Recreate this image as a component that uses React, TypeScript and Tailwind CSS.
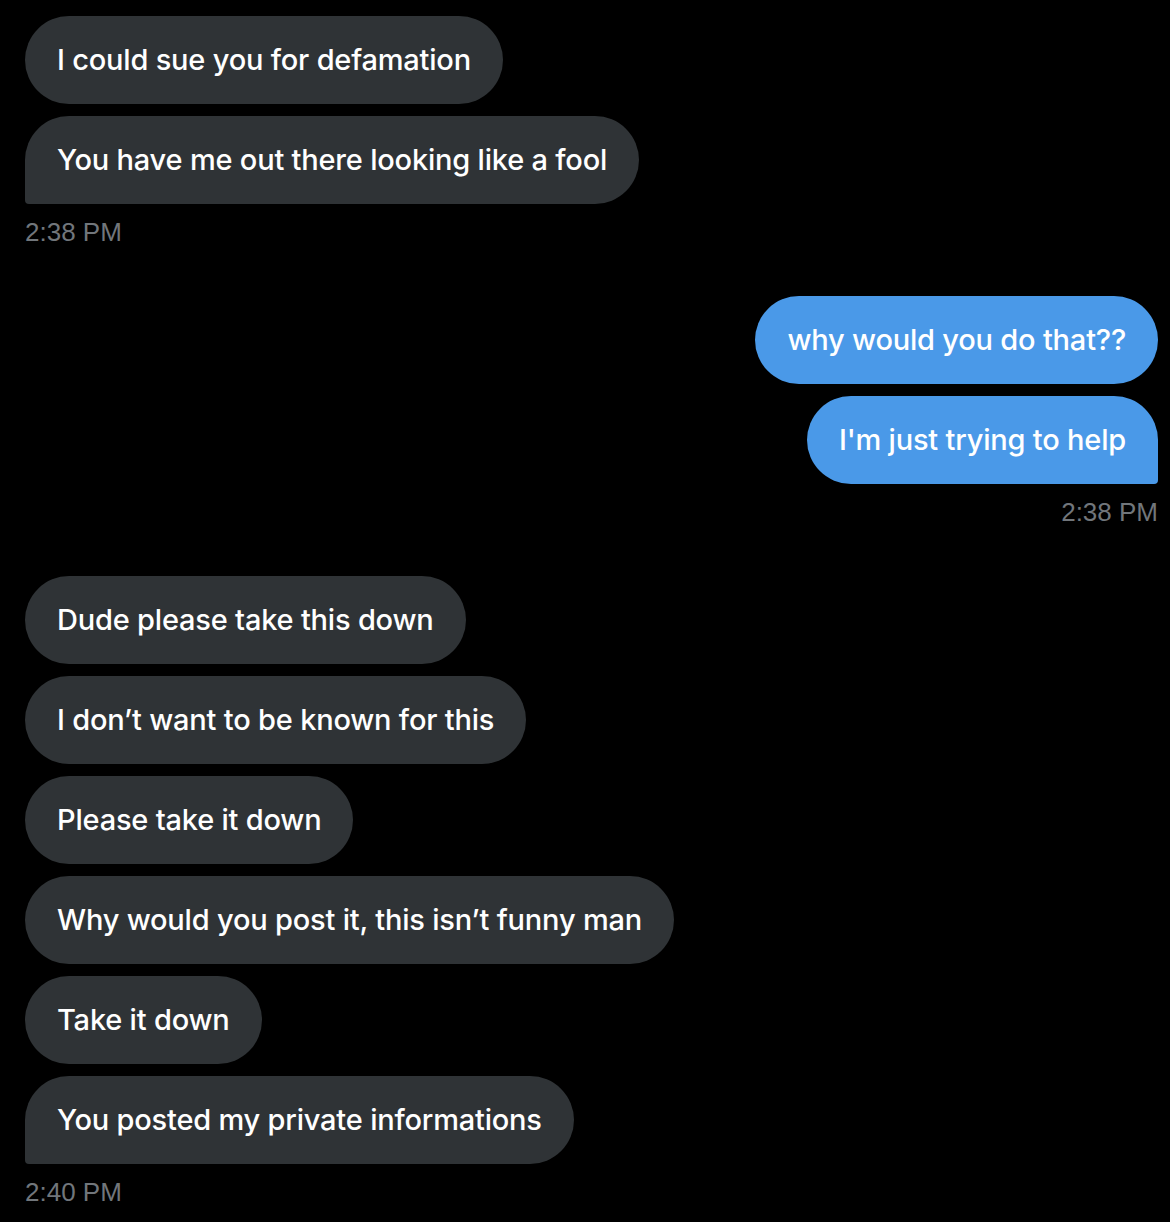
import React from 'react';

type Msg = { text: string; last?: boolean };

const Bubble: React.FC<{ msg: Msg; mine?: boolean }> = ({ msg, mine }) => {
  const base = 'h-[88px] flex items-center px-8 text-[29px] font-medium tracking-[-0.2px] text-white whitespace-nowrap rounded-[44px]';
  const tone = mine ? 'bg-[#4a99e8]' : 'bg-[#2f3336]';
  const corner = msg.last ? (mine ? 'rounded-br-[4px]' : 'rounded-bl-[4px]') : '';
  return <div className={`${base} ${tone} ${corner}`}>{msg.text}</div>;
};

const Group: React.FC<{ msgs: string[]; time: string; mine?: boolean }> = ({ msgs, time, mine }) => (
  <div className={`flex flex-col gap-3 ${mine ? 'items-end' : 'items-start'}`}>
    {msgs.map((t, i) => (
      <Bubble key={i} msg={{ text: t, last: i === msgs.length - 1 }} mine={mine} />
    ))}
    <div className="text-[26px] leading-none text-[#71767b] mt-[3px]" style={{ fontFamily: '"Liberation Sans", Arial, sans-serif' }}>
      {time}
    </div>
  </div>
);

export default function App() {
  return (
    <div
      className="w-[1170px] h-[1222px] bg-black pt-4 pl-[25px] pr-3 flex flex-col gap-[51px] overflow-hidden"
      style={{ fontFamily: 'Inter, "Noto Sans", sans-serif' }}
    >
      <Group msgs={['I could sue you for defamation', 'You have me out there looking like a fool']} time="2:38 PM" />
      <Group mine msgs={['why would you do that??', "I'm just trying to help"]} time="2:38 PM" />
      <Group
        msgs={[
          'Dude please take this down',
          'I don’t want to be known for this',
          'Please take it down',
          'Why would you post it, this isn’t funny man',
          'Take it down',
          'You posted my private informations',
        ]}
        time="2:40 PM"
      />
    </div>
  );
}
